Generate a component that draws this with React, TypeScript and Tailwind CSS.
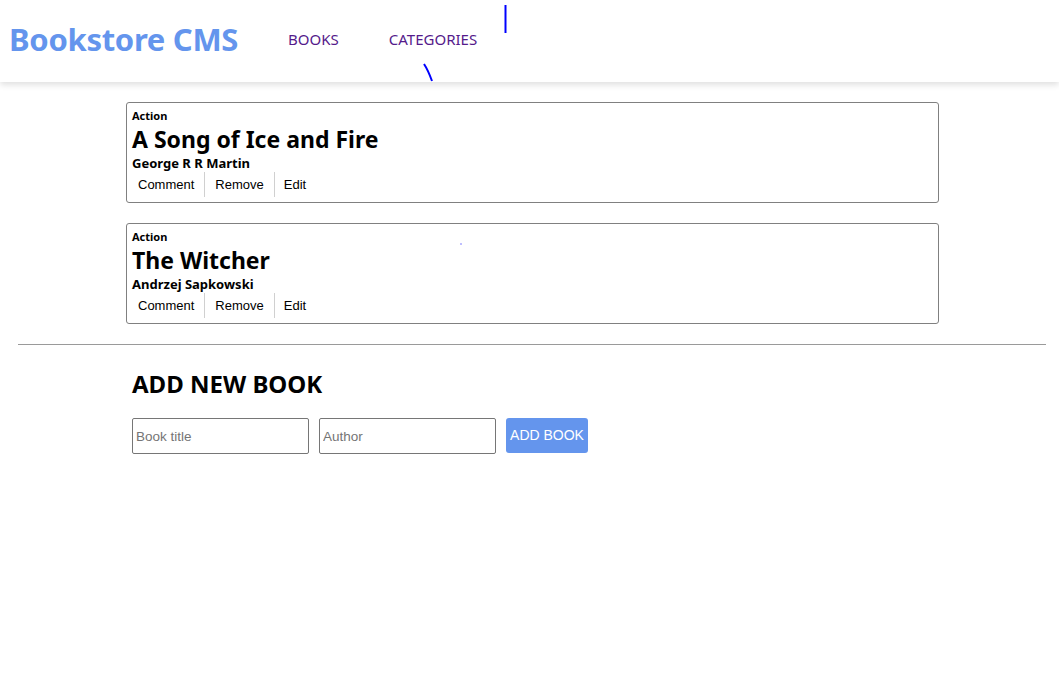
import React from 'react';

type Book = { category: string; title: string; author: string };

const books: Book[] = [
  { category: 'Action', title: 'A Song of Ice and Fire', author: 'George R R Martin' },
  { category: 'Action', title: 'The Witcher', author: 'Andrzej Sapkowski' },
];

const BookCard: React.FC<{ book: Book }> = ({ book }) => (
  <li className="border border-[#808080] rounded-[3px] px-[5px] pt-[6px] h-[101px]">
    <p className="text-[11px] font-bold leading-[14px]">{book.category}</p>
    <h2 className="text-[23px] font-bold leading-[32px]">{book.title}</h2>
    <p className="text-[13px] font-bold leading-[17px]">{book.author}</p>
    <div className="flex items-stretch h-[25px] font-['Liberation_Sans',Arial,sans-serif] text-[13px]">
      <button className="pl-[6px] pr-[10px] border-r border-[#d0d0d0]">Comment</button>
      <button className="px-[10px] border-r border-[#d0d0d0]">Remove</button>
      <button className="px-[9px]">Edit</button>
    </div>
  </li>
);

const App: React.FC = () => {
  return (
    <div className="relative min-h-[696px] bg-white text-black font-['Noto_Sans',sans-serif]">
      {/* Header */}
      <header className="flex items-center h-[82px] pl-[9px] pb-[4px] shadow-[0_3px_6px_rgba(0,0,0,0.12)]">
        <h1 className="text-[31px] font-bold text-[#6495ed] tracking-[-0.3px]">Bookstore CMS</h1>
        <nav className="flex items-center ml-[50px] gap-[50px] text-[15px] text-[#551a8b]">
          <a href="#">BOOKS</a>
          <a href="#">CATEGORIES</a>
        </nav>
      </header>

      {/* Books */}
      <ul className="ml-[126px] w-[813px] mt-[20px] flex flex-col gap-[20px]">
        {books.map((b) => (
          <BookCard key={b.title} book={b} />
        ))}
      </ul>

      <hr className="ml-[18px] mr-[13px] mt-[20px] border-t-[1.5px] border-[#9a9a9a]" />

      {/* Add form */}
      <section className="ml-[132px] mt-[23px]">
        <h2 className="text-[24px] font-bold leading-[32px]">ADD NEW BOOK</h2>
        <form className="flex gap-[10px] mt-[18px] font-['Liberation_Sans',Arial,sans-serif] text-[13.5px]">
          <input
            type="text"
            placeholder="Book title"
            className="w-[177px] h-[36px] border border-[#767676] rounded-[2px] px-[3px] placeholder:text-[#757575]"
          />
          <input
            type="text"
            placeholder="Author"
            className="w-[177px] h-[36px] border border-[#767676] rounded-[2px] px-[3px] placeholder:text-[#757575]"
          />
          <button type="button" className="w-[82px] h-[35px] bg-[#6495ed] text-white text-[14px] rounded-[3px]">
            ADD BOOK
          </button>
        </form>
      </section>

      {/* stray pen strokes */}
      <svg className="absolute left-0 top-0 pointer-events-none" width="1059" height="300">
        <line x1="505.5" y1="5" x2="505.5" y2="33" stroke="#0000ff" strokeWidth="2" />
        <path d="M424 64 Q428 70 432 81" stroke="#0000ff" strokeWidth="2" fill="none" />
        <rect x="460.5" y="243.5" width="1" height="1" fill="#0000ff" />
      </svg>
    </div>
  );
};

export default App;
